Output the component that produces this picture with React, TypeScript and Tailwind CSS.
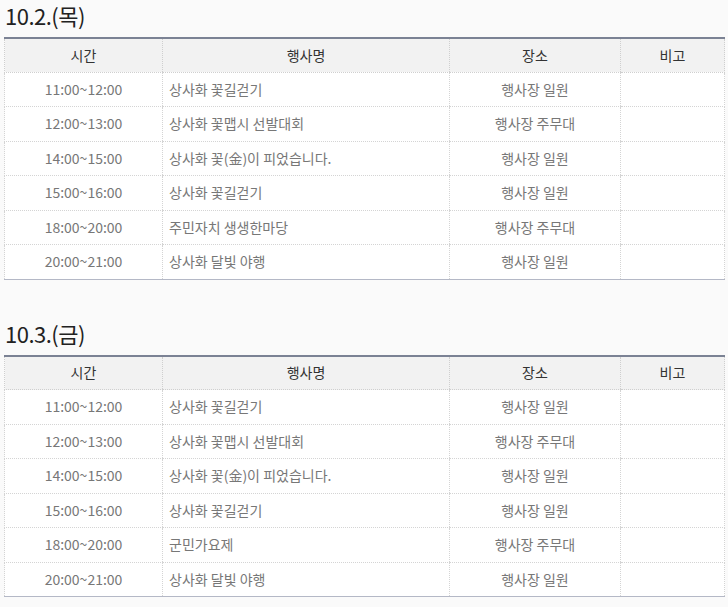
import React from "react";

type Row = { time: string; name: string; place: string };

const day1: Row[] = [
  { time: "11:00~12:00", name: "상사화 꽃길걷기", place: "행사장 일원" },
  { time: "12:00~13:00", name: "상사화 꽃맵시 선발대회", place: "행사장 주무대" },
  { time: "14:00~15:00", name: "상사화 꽃(金)이 피었습니다.", place: "행사장 일원" },
  { time: "15:00~16:00", name: "상사화 꽃길걷기", place: "행사장 일원" },
  { time: "18:00~20:00", name: "주민자치 생생한마당", place: "행사장 주무대" },
  { time: "20:00~21:00", name: "상사화 달빛 야행", place: "행사장 일원" },
];

const day2: Row[] = [
  { time: "11:00~12:00", name: "상사화 꽃길걷기", place: "행사장 일원" },
  { time: "12:00~13:00", name: "상사화 꽃맵시 선발대회", place: "행사장 주무대" },
  { time: "14:00~15:00", name: "상사화 꽃(金)이 피었습니다.", place: "행사장 일원" },
  { time: "15:00~16:00", name: "상사화 꽃길걷기", place: "행사장 일원" },
  { time: "18:00~20:00", name: "군민가요제", place: "행사장 주무대" },
  { time: "20:00~21:00", name: "상사화 달빛 야행", place: "행사장 일원" },
];

function Schedule({ title, rows }: { title: string; rows: Row[] }) {
  return (
    <section>
      <h2 className="text-[22px] leading-[30px] text-[#222] pl-[5px] mb-[7px] tracking-[-0.5px]">{title}</h2>
      <table className="w-[720px] ml-[4px] border-collapse table-fixed border-t-2 border-t-[#7b8294] border-b border-b-[#b4b8c6] text-[14px]">
        <colgroup>
          <col className="w-[158px]" />
          <col className="w-[287px]" />
          <col className="w-[171px]" />
          <col className="w-[104px]" />
        </colgroup>
        <thead>
          <tr className="h-[34px] bg-[#f2f2f2] text-[#333]">
            <th className="font-normal border-l border-dotted border-[#cfcfcf] border-b">시간</th>
            <th className="font-normal border-l border-dotted border-[#cfcfcf] border-b">행사명</th>
            <th className="font-normal border-l border-dotted border-[#cfcfcf] border-b">장소</th>
            <th className="font-normal border-l border-r border-dotted border-[#cfcfcf] border-b">비고</th>
          </tr>
        </thead>
        <tbody className="bg-white text-[#777]">
          {rows.map((r, i) => {
            const last = i === rows.length - 1;
            const bb = last ? "" : "border-b border-dotted border-b-[#d4d4d4]";
            return (
              <tr key={i} className="h-[34.5px]">
                <td className={`text-center border-l border-dotted border-l-[#d4d4d4] ${bb}`}>{r.time}</td>
                <td className={`text-left pl-[6px] border-l border-dotted border-l-[#d4d4d4] ${bb}`}>{r.name}</td>
                <td className={`text-center border-l border-dotted border-l-[#d4d4d4] ${bb}`}>{r.place}</td>
                <td className={`border-l border-r border-dotted border-l-[#d4d4d4] border-r-[#d4d4d4] ${bb}`}></td>
              </tr>
            );
          })}
        </tbody>
      </table>
    </section>
  );
}

export default function App() {
  return (
    <div
      className="w-[728px] h-[607px] bg-[#fafafa] overflow-hidden"
      style={{ fontFamily: '"Noto Sans CJK KR", "Noto Sans", sans-serif' }}
    >
      <Schedule title="10.2.(목)" rows={day1} />
      <div className="h-[38px]" />
      <Schedule title="10.3.(금)" rows={day2} />
    </div>
  );
}
